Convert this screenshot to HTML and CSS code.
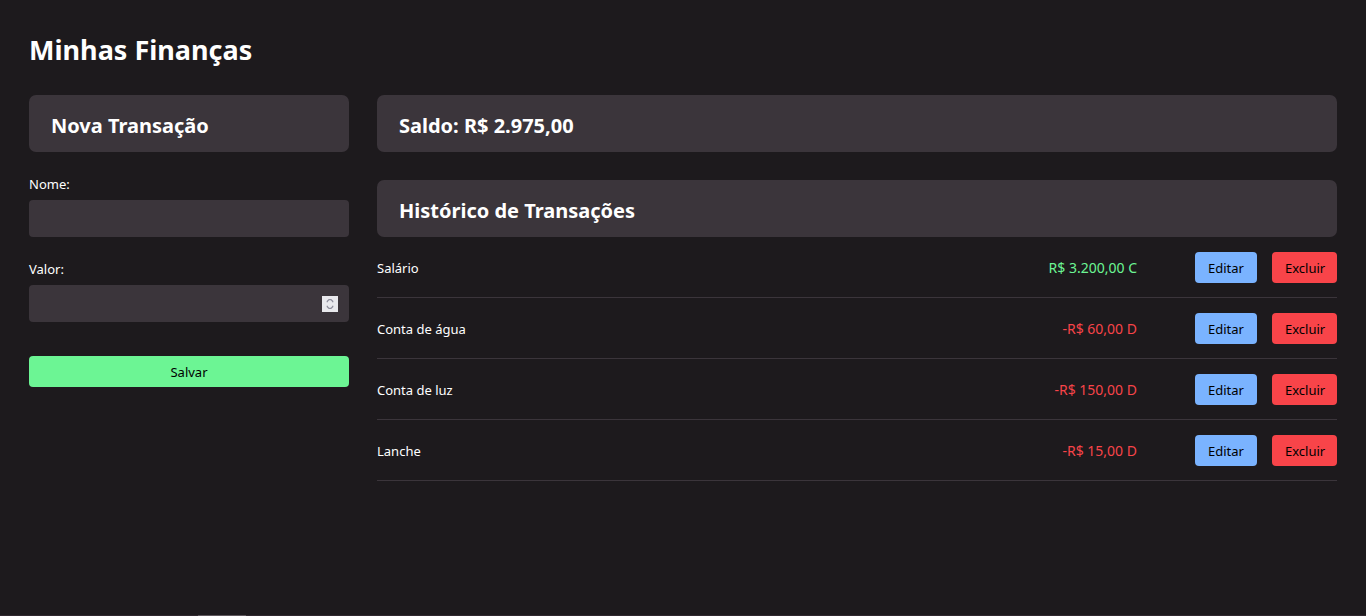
FILE: index.html
```html
<!DOCTYPE html>
<html lang="pt-BR">
<head>
<meta charset="utf-8">
<meta name="viewport" content="width=device-width, initial-scale=1">
<title>Minhas Finanças</title>
<link rel="stylesheet" href="styles.css">
</head>
<body>
<div class="page">
  <h1 class="title">Minhas Finanças</h1>
  <main class="layout">
    <section>
      <h2 class="panel">Nova Transação</h2>
      <form class="form">
        <div class="field">
          <label class="label" for="nome">Nome:</label>
          <input class="input" id="nome" type="text">
        </div>
        <div class="field">
          <label class="label" for="valor">Valor:</label>
          <div class="number">
            <input class="input" id="valor" type="number" step="0.01">
            <svg class="spinner" viewBox="0 0 16 16" aria-hidden="true"><path d="M5.300 6.200V5.300L7 3.600H9L10.700 5.300V6.200M5.300 9.800V10.700L7 12.400H9L10.700 10.700V9.800"/></svg>
          </div>
        </div>
        <button class="button save" type="button">Salvar</button>
      </form>
    </section>
    <section>
      <h2 class="panel balance">Saldo: R$ 2.975,00</h2>
      <h2 class="panel">Histórico de Transações</h2>
      <ul class="list">
        <li class="row"><span class="name">Salário</span><span class="amount credit">R$ 3.200,00 C</span><span class="actions"><button class="button edit" type="button">Editar</button><button class="button delete" type="button">Excluir</button></span></li>
        <li class="row"><span class="name">Conta de água</span><span class="amount debit">-R$ 60,00 D</span><span class="actions"><button class="button edit" type="button">Editar</button><button class="button delete" type="button">Excluir</button></span></li>
        <li class="row"><span class="name">Conta de luz</span><span class="amount debit">-R$ 150,00 D</span><span class="actions"><button class="button edit" type="button">Editar</button><button class="button delete" type="button">Excluir</button></span></li>
        <li class="row"><span class="name">Lanche</span><span class="amount debit">-R$ 15,00 D</span><span class="actions"><button class="button edit" type="button">Editar</button><button class="button delete" type="button">Excluir</button></span></li>
      </ul>
    </section>
  </main>
</div>
<footer class="edge"><span class="edge-mark"></span></footer>
</body>
</html>
```

FILE: styles.css
```css
* {
  box-sizing: border-box;
  margin: 0;
  padding: 0;
}

body {
  display: flex;
  flex-direction: column;
  min-height: 100vh;
  background: #1d1a1d;
  color: #fff;
  font: 13px/20px "Segoe UI", "Noto Sans", sans-serif;
}

.page {
  flex: 1;
  padding: 29px;
}

.title {
  margin-bottom: 25px;
  font-size: 27px;
  line-height: 41px;
}

.layout {
  display: grid;
  grid-template-columns: 320px 1fr;
  gap: 28px;
}

.panel {
  padding: 16px 22px 12px;
  border-radius: 7px;
  background: #3b353b;
  font-size: 20px;
  line-height: 29px;
}

.balance {
  margin-bottom: 28px;
}

.form {
  display: flex;
  flex-direction: column;
  gap: 22px;
  padding-top: 22px;
}

.field {
  display: flex;
  flex-direction: column;
  gap: 6px;
}

.input {
  display: block;
  width: 100%;
  height: 37px;
  padding: 0 11px;
  border: 0;
  border-radius: 4px;
  background: #3b353b;
  color: #fff;
  font: inherit;
  appearance: textfield;
}

.input::-webkit-inner-spin-button {
  appearance: none;
}

.number {
  position: relative;
}

.spinner {
  position: absolute;
  top: 11px;
  right: 11px;
  width: 16px;
  height: 16px;
  background: #e9e9ed;
  fill: none;
  stroke: #8f8f9d;
  stroke-width: 1.3;
}

.button {
  height: 31px;
  padding: 0 13px;
  border: 0;
  border-radius: 4px;
  color: #000;
  font: inherit;
  cursor: pointer;
}

.save {
  margin-top: 12px;
  background: #6cf594;
}

.list {
  list-style: none;
}

.row {
  display: grid;
  grid-template-columns: 1fr auto 200px;
  align-items: center;
  padding: 15px 0 14px;
  border-bottom: 1px solid #3b353b;
}

.amount {
  font-size: 14px;
}

.credit {
  color: #6cf594;
}

.debit {
  color: #f84449;
}

.actions {
  display: flex;
  justify-content: flex-end;
  gap: 15px;
}

.edit {
  width: 62px;
  background: #7ab3ff;
}

.delete {
  width: 65px;
  background: #f84449;
}

.edge {
  height: 1px;
  padding-left: 198px;
  background: #30282f;
}

.edge-mark {
  display: block;
  width: 48px;
  height: 1px;
  background: #5d565c;
}
```
